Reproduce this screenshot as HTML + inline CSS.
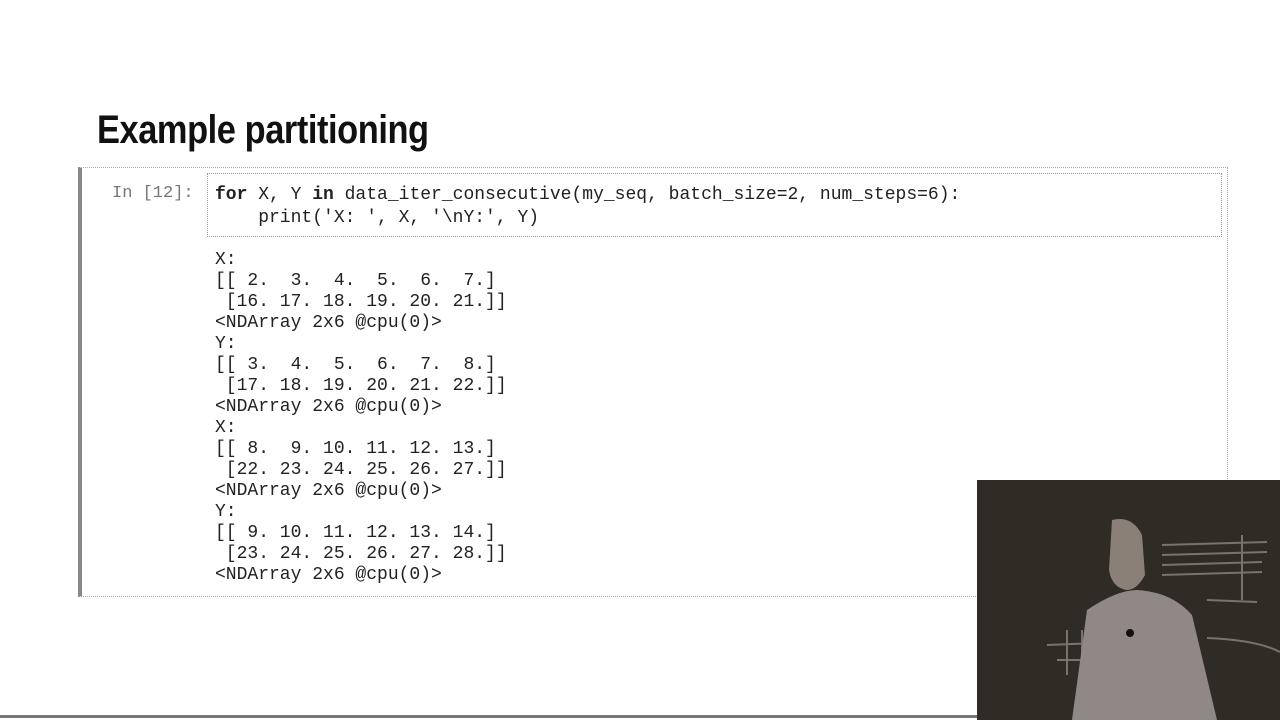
<!DOCTYPE html>
<html><head><style>
body{margin:0;width:1280px;height:720px;background:#fff;position:relative;overflow:hidden;font-family:"Liberation Sans",sans-serif}
.t{position:absolute;left:97px;top:108px;font-size:40px;font-weight:bold;color:#111;transform:scaleX(0.86);transform-origin:left top;letter-spacing:-0.5px}
.cell{position:absolute;left:78px;top:167px;width:1150px;height:430px;border:1px dotted #aaa;border-left:4px solid #888;box-sizing:border-box}
.inb{position:absolute;left:207px;top:173px;width:1015px;height:64px;border:1px dotted #999;box-sizing:border-box;background:#fff}
.mono{font-family:"Liberation Mono",monospace;font-size:18px;white-space:pre;position:absolute;line-height:21px}
.pr{left:112px;top:183px;color:#777;font-size:17px}
.code{left:215px;top:184px;color:#222;line-height:23px}
.out{left:215px;top:250px;color:#222}
.vid{position:absolute;left:977px;top:480px;width:303px;height:240px;background:#2f2b25}
.line{position:absolute;left:0;top:715px;width:977px;height:3px;background:#777}
</style></head><body>
<div class="t">Example partitioning</div>
<div class="cell"></div>
<div class="inb"></div>
<div class="mono pr">In [12]:</div>
<div class="mono code"><b>for</b> X, Y <b>in</b> data_iter_consecutive(my_seq, batch_size=2, num_steps=6):
    print('X: ', X, '\nY:', Y)</div>
<div class="mono out">X:
[[ 2.  3.  4.  5.  6.  7.]
 [16. 17. 18. 19. 20. 21.]]
&lt;NDArray 2x6 @cpu(0)&gt;
Y:
[[ 3.  4.  5.  6.  7.  8.]
 [17. 18. 19. 20. 21. 22.]]
&lt;NDArray 2x6 @cpu(0)&gt;
X:
[[ 8.  9. 10. 11. 12. 13.]
 [22. 23. 24. 25. 26. 27.]]
&lt;NDArray 2x6 @cpu(0)&gt;
Y:
[[ 9. 10. 11. 12. 13. 14.]
 [23. 24. 25. 26. 27. 28.]]
&lt;NDArray 2x6 @cpu(0)&gt;</div>
<div class="line"></div>
<div class="vid">
<svg width="303" height="240" viewBox="0 0 303 240">
<g stroke="#7a726c" stroke-width="2" fill="none">
<path d="M185 65 L290 62 M185 75 L290 72 M185 85 L285 82 M185 95 L285 92 M230 120 L280 122 M265 55 L265 120"/>
<path d="M70 165 L120 163 M80 180 L120 180 M90 150 L90 195 M105 150 L105 195 M230 158 Q280 160 303 172"/>
</g>
<path d="M135 40 Q155 35 165 55 L168 95 Q160 110 150 110 Q135 108 132 90 Z" fill="#8a8078"/>
<path d="M95 240 L110 130 Q140 110 160 110 Q195 112 215 135 L240 240 Z" fill="#908884"/>
<circle cx="153" cy="153" r="4" fill="#111"/>
</svg>
</div>
</body></html>
